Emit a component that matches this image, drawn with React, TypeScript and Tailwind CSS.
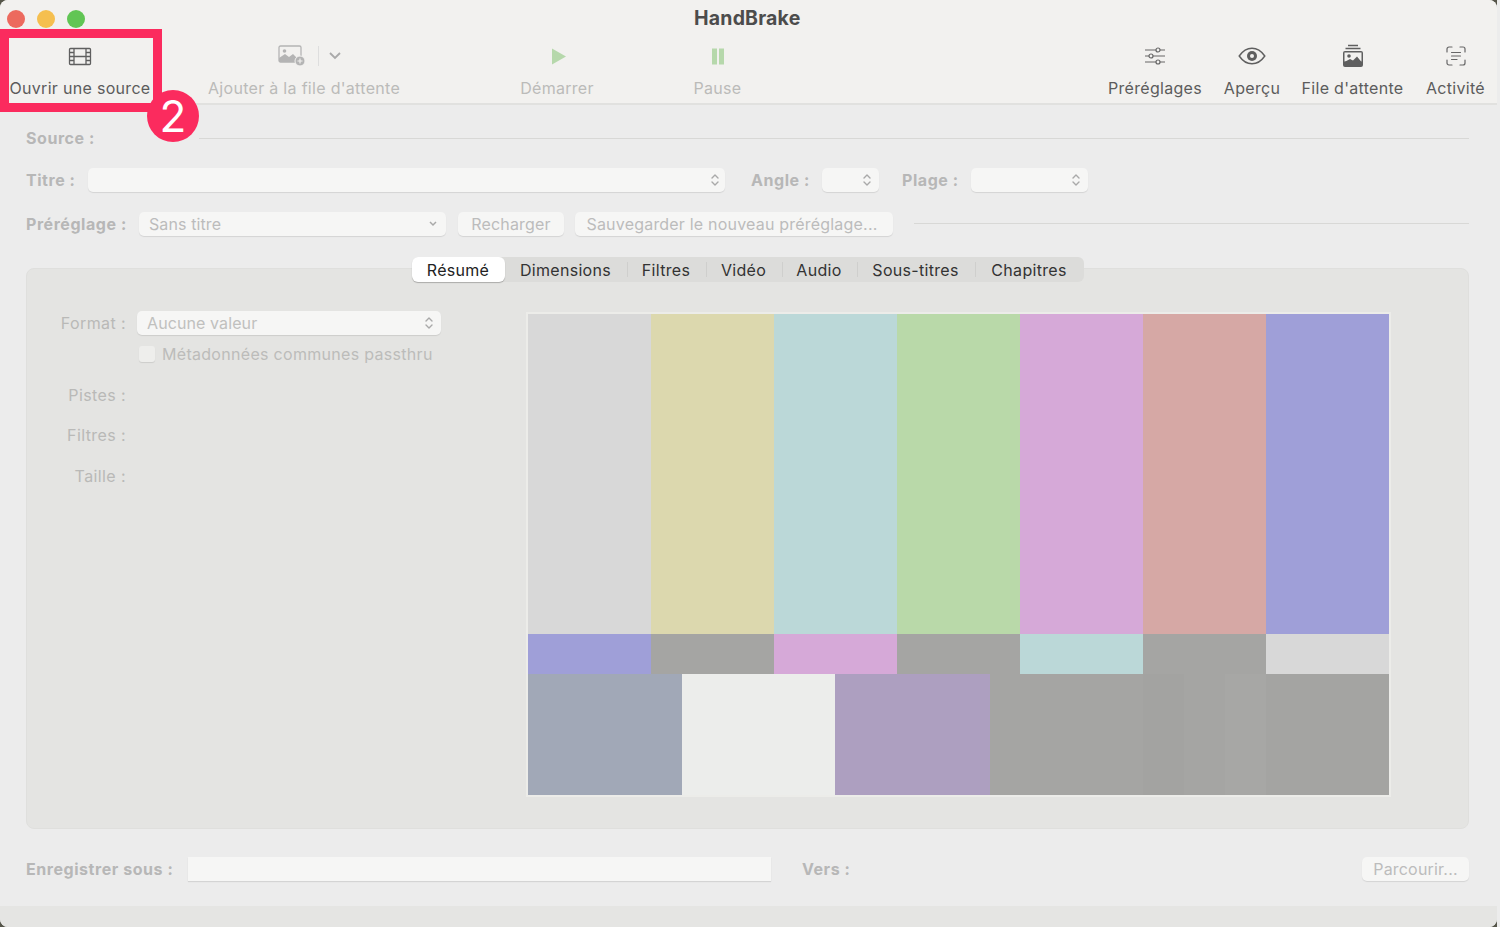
import React from 'react';

const FONT = 'font-[Inter,"Liberation_Sans",sans-serif]';

function UpDown({ className = '' }: { className?: string }) {
  return (
    <svg width="8" height="14" viewBox="0 0 8 14" className={className} fill="none" stroke="#a9a9a9" strokeWidth="1.4" strokeLinecap="round" strokeLinejoin="round">
      <path d="M1 5 L4 2 L7 5" />
      <path d="M1 9 L4 12 L7 9" />
    </svg>
  );
}

function Select({ className, text }: { className: string; text?: string }) {
  return (
    <div className={`flex h-[24px] items-center justify-between rounded-[5px] bg-[#f6f6f5] pl-[10px] text-[16px] text-[#bcbcbc] shadow-[0_1px_1px_rgba(0,0,0,0.1)] ${className}`}>
      <span className="tracking-[0.1px]">{text}</span>
      <UpDown />
    </div>
  );
}

function Button({ className, children }: { className: string; children: React.ReactNode }) {
  return (
    <div className={`flex h-[24px] items-center justify-center rounded-[5px] bg-[#f6f6f5] text-[16px] text-[#bcbcbc] shadow-[0_1px_1px_rgba(0,0,0,0.1)] ${className}`}>
      {children}
    </div>
  );
}

function ToolItem({ label, icon, className = '', muted = false }: { label: string; icon: React.ReactNode; className?: string; muted?: boolean }) {
  return (
    <div className={`flex flex-col items-center whitespace-nowrap ${className}`}>
      <div className="flex h-[26px] items-center justify-center">{icon}</div>
      <div className={`mt-[9px] text-[16px] leading-[20px] tracking-[0.3px] ${muted ? 'text-[#bbbbb9]' : 'text-[#5c5c5c]'}`}>{label}</div>
    </div>
  );
}

const FilmIcon = (
  <svg width="24" height="19" viewBox="0 0 24 19" fill="none" stroke="#5f5f5f" strokeWidth="1.3">
    <rect x="1.5" y="1.5" width="21" height="16" rx="1" />
    <path d="M6 1.5 V17.5 M18 1.5 V17.5 M6 9.5 H18 M1.5 5.5 H6 M1.5 9.5 H6 M1.5 13.5 H6 M18 5.5 H22.5 M18 9.5 H22.5 M18 13.5 H22.5" />
  </svg>
);

const AddPhotoIcon = (
  <svg width="28" height="22" viewBox="0 0 28 22">
    <rect x="1" y="1" width="22" height="16" rx="1.5" fill="none" stroke="#b4b4b4" strokeWidth="1.3" />
    <circle cx="6.5" cy="6" r="1.8" fill="#b4b4b4" />
    <path d="M1 17 V13 L7 9 L11 12 L15 9 L18 12 V17 Z" fill="#b4b4b4" />
    <circle cx="22" cy="16" r="5" fill="#b4b4b4" stroke="#f2f1ef" strokeWidth="1" />
    <path d="M22 13.5 V18.5 M19.5 16 H24.5" stroke="#f2f1ef" strokeWidth="1.2" />
  </svg>
);

const SlidersIcon = (
  <svg width="22" height="18" viewBox="0 0 22 18" fill="none" stroke="#666" strokeWidth="1.2">
    <path d="M1 3 H12 M16 3 H21 M1 9 H5 M9 9 H21 M1 15 H12 M16 15 H21" />
    <circle cx="14" cy="3" r="2" />
    <circle cx="7" cy="9" r="2" />
    <circle cx="14" cy="15" r="2" />
  </svg>
);

const EyeIcon = (
  <svg width="28" height="18" viewBox="0 0 28 18">
    <path d="M1.2 9 C5 3.5 9 1.2 14 1.2 C19 1.2 23 3.5 26.8 9 C23 14.5 19 16.8 14 16.8 C9 16.8 5 14.5 1.2 9 Z" fill="none" stroke="#5f5f5f" strokeWidth="1.4" />
    <circle cx="14" cy="9" r="5" fill="#5f5f5f" />
    <circle cx="14" cy="9" r="2" fill="#f2f1ef" />
  </svg>
);

const QueueIcon = (
  <svg width="22" height="24" viewBox="0 0 22 24">
    <path d="M6 1.5 H16 M3.5 4.5 H18.5" stroke="#5f5f5f" strokeWidth="1.3" fill="none" />
    <rect x="1" y="7" width="20" height="16" rx="2" fill="#5f5f5f" />
    <rect x="2.5" y="8.5" width="17" height="9" fill="#f2f1ef" />
    <circle cx="7" cy="12" r="1.8" fill="#5f5f5f" />
    <path d="M2.5 18 L8 15 L11 16.5 L15 12.5 L19.5 18 Z" fill="#5f5f5f" />
  </svg>
);

const ActivityIcon = (
  <svg width="20" height="20" viewBox="0 0 20 20" fill="none" stroke="#666" strokeWidth="1.2" strokeLinecap="round">
    <path d="M1 6 V3 A2 2 0 0 1 3 1 H6 M14 1 H17 A2 2 0 0 1 19 3 V6 M19 14 V17 A2 2 0 0 1 17 19 H14 M6 19 H3 A2 2 0 0 1 1 17 V14" />
    <path d="M5.5 6.5 H14.5 M5.5 10 H14.5 M5.5 13.5 H11" />
  </svg>
);

const PlayIcon = (
  <svg width="16" height="17" viewBox="0 0 16 17" className="ml-[3px]"><path d="M1 0.5 L15 8.5 L1 16.5 Z" fill="#b6d8ab" /></svg>
);

const PauseIcon = (
  <svg width="14" height="17" viewBox="0 0 14 17">
    <rect x="1" y="0.5" width="5" height="16" fill="#b6d8ab" />
    <rect x="8" y="0.5" width="5" height="16" fill="#b6d8ab" />
  </svg>
);

function Toolbar() {
  return (
    <div className="relative h-[105px] shrink-0 border-b-2 border-[#e1e1df] bg-[#f2f1ef]">
      <div className="flex h-[37px] items-center pl-[7px]">
        <div className="flex gap-[12px]">
          <span className="h-[18px] w-[18px] rounded-full bg-[#ec6a5e]" />
          <span className="h-[18px] w-[18px] rounded-full bg-[#f5bf4f]" />
          <span className="h-[18px] w-[18px] rounded-full bg-[#61c554]" />
        </div>
        <div className="ml-[609px] w-[106px] whitespace-nowrap text-center text-[19.5px] font-bold tracking-[0.2px] text-[#4c4c4c]">HandBrake</div>
      </div>
      <div className="flex pl-[10px] pr-[12px] pt-[6px]">
        <ToolItem label="Ouvrir une source" icon={FilmIcon} className="w-[140px]" />
        <ToolItem
          muted
          label="Ajouter à la file d'attente"
          className="ml-[57px] w-[194px]"
          icon={
            <div className="ml-[11px] flex items-center">
              {AddPhotoIcon}
              <span className="ml-[12px] h-[20px] w-px bg-[#dedede]" />
              <svg width="12" height="8" viewBox="0 0 12 8" fill="none" stroke="#a9a9a9" strokeWidth="1.8" className="ml-[10px]">
                <path d="M1 1 L6 6 L11 1" />
              </svg>
            </div>
          }
        />
        <ToolItem muted label="Démarrer" icon={PlayIcon} className="ml-[119px] w-[74px]" />
        <ToolItem muted label="Pause" icon={PauseIcon} className="ml-[100px] w-[47px]" />
        <div className="flex-1" />
        <ToolItem label="Préréglages" icon={SlidersIcon} className="w-[94px]" />
        <ToolItem label="Aperçu" icon={EyeIcon} className="ml-[22px] w-[56px]" />
        <ToolItem label="File d'attente" icon={QueueIcon} className="ml-[21px] w-[103px]" />
        <ToolItem label="Activité" icon={ActivityIcon} className="ml-[22px] w-[59px]" />
      </div>
    </div>
  );
}

const TABS = [
  { label: 'Résumé', width: 'w-[93px]' },
  { label: 'Dimensions', width: 'w-[122px]' },
  { label: 'Filtres', width: 'w-[79px]' },
  { label: 'Vidéo', width: 'w-[76px]' },
  { label: 'Audio', width: 'w-[75px]' },
  { label: 'Sous-titres', width: 'w-[118px]' },
  { label: 'Chapitres', width: 'w-[109px]' },
];

function Tabs() {
  return (
    <div className="mx-auto -mt-[12px] flex h-[25px] w-fit items-center rounded-[6px] bg-[#dcdcda] text-[16px] tracking-[0.3px] text-[#333]">
      {TABS.map((t, i) => (
        <div
          key={t.label}
          className={`flex h-[25px] items-center justify-center ${t.width} ${i === 0 ? 'rounded-[6px] bg-white text-[#222] shadow-[0_1px_1px_rgba(0,0,0,0.25)]' : ''} ${i > 1 ? 'relative' : ''}`}
        >
          {i > 1 && <span className="absolute left-0 top-[5px] h-[15px] w-px bg-[#cfcfcd]" />}
          {t.label}
        </div>
      ))}
    </div>
  );
}

const TOP_BARS = ['bg-[#d8d8d8]', 'bg-[#dcd8ae]', 'bg-[#bbd8d8]', 'bg-[#b9d9a9]', 'bg-[#d6a9d8]', 'bg-[#d6a8a5]', 'bg-[#9f9fd8]'];
const MID_BARS = ['bg-[#9f9fd8]', 'bg-[#a5a5a3]', 'bg-[#d6a9d8]', 'bg-[#a5a5a3]', 'bg-[#bbd8d8]', 'bg-[#a5a5a3]', 'bg-[#d8d8d8]'];

function ColorBars() {
  return (
    <div className="ml-[84px] h-[485px] w-[865px] border-2 border-[#ecece9]">
      <div className="flex h-[320px]">
        {TOP_BARS.map((c, i) => <div key={i} className={`flex-1 ${c}`} />)}
      </div>
      <div className="flex h-[40px]">
        {MID_BARS.map((c, i) => <div key={i} className={`flex-1 ${c}`} />)}
      </div>
      <div className="flex h-[121px]">
        <div className="w-[154px] bg-[#a1a8b7]" />
        <div className="w-[153px] bg-[#ecedeb]" />
        <div className="w-[155px] bg-[#ad9fc0]" />
        <div className="w-[153px] bg-[#a5a5a3]" />
        <div className="w-[41px] bg-[#a3a3a1]" />
        <div className="w-[41px] bg-[#a5a5a3]" />
        <div className="w-[41px] bg-[#a7a7a5]" />
        <div className="flex-1 bg-[#a4a4a2]" />
      </div>
    </div>
  );
}

function Summary() {
  return (
    <div className="mt-[30px] flex">
      <div className="-mt-[1px] w-[415px] pl-[33px] text-[16px] tracking-[0.4px] text-[#b9b9b7]">
        <div className="flex h-[24px] items-center">
          <div className="w-[66px] whitespace-nowrap text-right">Format :</div>
          <Select className="ml-[11px] w-[304px] pr-[8px] text-[#c0c0be]" text="Aucune valeur" />
        </div>
        <div className="mt-[7px] flex h-[24px] items-center whitespace-nowrap pl-[79px] text-[#bcbcba]">
          <span className="h-[16px] w-[16px] rounded-[3px] bg-[#eeeeec] shadow-[0_1px_1px_rgba(0,0,0,0.1)]" />
          <span className="ml-[7px] tracking-[0.3px]">Métadonnées communes passthru</span>
        </div>
        <div className="mt-[17px] w-[66px] text-right leading-[24px]">Pistes :</div>
        <div className="mt-[16px] w-[66px] text-right leading-[24px]">Filtres :</div>
        <div className="mt-[17px] w-[66px] text-right leading-[24px]">Taille :</div>
      </div>
      <ColorBars />
    </div>
  );
}

export default function App() {
  return (
    <div className="h-[927px] w-full bg-[#ececec]">
      <div className="relative h-[927px] w-[1497px] overflow-hidden bg-[#55554a]">
        <div className={`flex h-[927px] flex-col overflow-hidden rounded-[8px] bg-[#ececec] ${FONT}`}>
          <Toolbar />

          <div className="flex-1 pl-[26px] pr-[28px]">
            <div className="mt-[21px] flex h-[24px] items-center text-[16px] font-bold tracking-[0.55px] text-[#b7b7b7]">
              <span className="whitespace-nowrap">Source :</span>
              <div className="ml-[104px] h-px flex-1 bg-[#d8d8d6]" />
            </div>

            <div className="mt-[18px] flex h-[24px] items-center text-[16px] font-bold tracking-[0.55px] text-[#b7b7b7]">
              <span className="w-[62px] whitespace-nowrap">Titre :</span>
              <Select className="w-[637px] pr-[6px] font-normal" />
              <span className="ml-[26px] w-[71px] whitespace-nowrap">Angle :</span>
              <Select className="w-[57px] pr-[8px] font-normal" />
              <span className="ml-[23px] w-[69px] whitespace-nowrap">Plage :</span>
              <Select className="w-[117px] pr-[8px] font-normal" />
            </div>

            <div className="mt-[20px] flex h-[24px] items-center text-[16px] font-bold tracking-[0.55px] text-[#b7b7b7]">
              <span className="w-[113px] whitespace-nowrap">Préréglage :</span>
              <div className="flex h-[24px] w-[307px] items-center justify-between rounded-[5px] bg-[#f6f6f5] pl-[10px] pr-[9px] font-normal tracking-[0.1px] text-[#bcbcbc] shadow-[0_1px_1px_rgba(0,0,0,0.1)]">
                <span>Sans titre</span>
                <svg width="8" height="6" viewBox="0 0 8 6" fill="none" stroke="#a9a9a9" strokeWidth="1.5"><path d="M1 1 L4 4 L7 1" /></svg>
              </div>
              <Button className="ml-[12px] w-[106px] font-normal tracking-[0.2px]">Recharger</Button>
              <Button className="ml-[11px] w-[318px] whitespace-nowrap pr-[4px] font-normal tracking-[0.2px]">Sauvegarder le nouveau préréglage...</Button>
              <div className="mb-[2px] ml-[21px] h-px flex-1 bg-[#d8d8d6]" />
            </div>

            <div className="mt-[32px] h-[561px] rounded-[8px] border border-[#dfdfdd] bg-[#e4e4e2]">
              <Tabs />
              <Summary />
            </div>

            <div className="mt-[28px] flex h-[24px] items-center text-[16px] font-bold tracking-[0.55px] text-[#b7b7b7]">
              <span className="w-[162px] whitespace-nowrap">Enregistrer sous :</span>
              <div className="h-[24px] w-[583px] bg-[#f6f6f5] shadow-[0_1px_1px_rgba(0,0,0,0.1)]" />
              <span className="ml-[31px] whitespace-nowrap">Vers :</span>
              <div className="flex-1" />
              <Button className="w-[107px] font-normal tracking-[0.2px]">Parcourir...</Button>
            </div>
          </div>

          <div className="h-[21px] shrink-0 bg-[#e5e5e3]" />
        </div>

        {/* annotation par-dessus la capture */}
        <div className="absolute left-0 top-[29px] h-[83px] w-[162px] border-[9px] border-[#fb2b5e]" />
        <div className={`absolute left-[147px] top-[90px] flex h-[52px] w-[52px] items-center justify-center rounded-full bg-[#fb2b5e] text-[44px] font-normal leading-none text-white ${FONT}`}>2</div>
      </div>
    </div>
  );
}
